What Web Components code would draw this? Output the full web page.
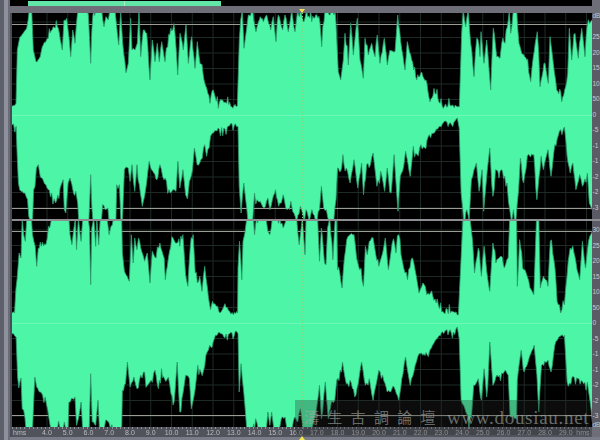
<!DOCTYPE html>
<html>
<head>
<meta charset="utf-8">
<title>Waveform</title>
<style>
  html, body { margin: 0; padding: 0; background: #6d6e78; overflow: hidden; }
</style>
</head>
<body>
<wave-editor></wave-editor>
<script>
/**
 * Traced wave outlines, as "x,y" pairs in the crop they were read from.
 */
const CH1_TOP_A = '37,318 48,310 52,150 60,110 70,100 80,85 88,40 95,40 100,150 108,185 118,175 130,135 145,115 160,80 175,85 187,150 192,60 200,55 208,120 212,170 218,90 225,130 232,45 250,40 258,40 265,45 272,190 278,50 290,40 305,40 312,80 318,50 325,60 330,40 345,40 350,80 356,135 362,40 368,130 378,218 385,190 392,55 396,150 405,150 412,130 417,40 422,170 430,90 440,100 450,240 457,120 465,185 472,130 478,185 485,125 495,185 503,140 512,85 525,100 533,225 540,100 550,150 558,75 565,190 575,110 585,205 592,125 600,190 612,240 620,265 630,310 640,270 655,325 665,300 680,310 695,320 712,318 718,120 722,60 727,40 732,145 738,100 745,45 758,40 768,95 778,60 790,65 800,45 812,90 820,50 828,125 835,45 848,90 855,45 865,95 875,40 885,95 893,40 899,50'
const CH1_TOP_B = '0,40 12,65 20,40 35,65 50,45 60,70 65,140 72,65 78,40 105,40 108,70 115,215 122,240 130,180 135,100 145,195 152,70 160,165 172,55 180,180 190,235 195,115 205,165 215,130 225,170 232,105 240,190 253,115 262,195 270,150 285,155 293,45 302,125 315,210 322,125 335,180 350,240 362,220 378,240 390,305 405,280 420,310 430,325 450,315 472,320 478,320 485,100 490,40 497,80 505,40 512,130 522,230 530,115 540,170 543,95 552,190 560,120 572,270 580,85 590,170 600,175 605,130 615,130 625,60 628,40 632,100 640,40 650,40 657,130 665,160 680,180 692,245 700,170 712,95 720,260 735,190 745,250 750,110 760,190 770,270 785,305 797,260 803,220 808,85 815,180 825,100 835,175 845,85 855,170 862,75 872,65 876,60'
const CH1_BOTTOM = '32,35 42,40 48,210 55,235 65,240 72,260 75,310 80,319 85,319 88,230 95,165 100,155 105,190 120,215 135,240 145,270 160,215 165,200 168,290 172,300 178,210 183,195 188,215 192,240 198,235 203,270 206,319 232,319 234,280 237,185 240,280 243,319 265,319 268,275 275,290 282,285 285,319 303,319 305,215 312,215 316,319 320,319 325,170 335,165 340,205 345,155 352,235 358,155 364,215 372,280 378,250 383,210 390,145 396,170 402,180 410,200 418,155 425,190 435,205 445,240 455,230 460,235 465,145 470,225 478,170 485,245 490,258 495,205 503,170 508,105 515,155 522,150 535,95 540,130 550,70 555,60 570,45 585,45 600,38 615,32 622,40 625,220 630,300 637,210 642,260 648,319 660,319 665,240 672,260 680,265 690,285 700,255 705,290 712,260 720,230 728,280 735,270 740,245 750,290 760,265 768,300 775,319 785,280 795,319 800,290 808,319 815,290 825,319 835,290 840,220 846,285 853,290 860,319 872,319 878,260 882,165 890,175 896,125 905,165 915,210 925,140 935,225 945,150 950,245 958,155 968,155 975,120 985,220 995,175 1005,235 1012,165 1022,240 1030,125 1040,295 1046,190 1055,160 1060,115 1072,190 1080,100 1090,125 1100,95 1110,105 1122,65 1135,60 1150,40 1165,25 1180,35 1195,15 1200,45 1205,240 1212,319 1220,290 1226,319 1232,200 1245,150 1252,235 1260,170 1264,295 1270,215 1280,105 1288,250 1295,170 1310,170 1325,210 1332,290 1337,319 1342,290 1348,319 1355,235 1360,135 1368,210 1378,130 1395,125 1403,260 1414,130 1420,170 1432,110 1440,190 1450,95 1462,55 1475,42 1482,130 1490,180 1497,150 1505,230 1515,185 1522,220 1535,180 1540,270 1547,290'
const CH2_TOP = '32,285 38,285 45,180 50,105 55,120 58,8 62,50 66,70 70,8 82,8 85,50 92,85 96,145 100,90 108,85 120,80 130,30 135,8 180,8 183,50 188,80 192,40 197,10 200,95 205,10 212,70 216,8 230,8 234,30 237,200 240,30 245,10 250,85 253,10 258,80 262,8 280,10 285,50 290,25 300,8 318,8 320,105 325,160 332,175 338,190 343,50 348,135 352,60 358,95 362,60 370,100 378,130 385,105 392,195 398,100 408,120 418,75 426,110 432,185 440,120 452,60 462,75 470,85 478,50 485,170 491,205 497,90 505,50 510,165 516,195 522,175 528,220 535,145 545,240 550,275 555,250 565,265 575,285 585,265 600,280 610,290 621,285 622,150 626,70 632,185 635,70 640,45 645,8 662,8 665,50 670,10 680,10 695,10 700,40 705,50 712,10 725,10 740,30 745,15 755,8 775,8 782,80 790,8 797,110 800,8 818,10 830,8 835,130 840,30 848,135 852,140 856,30 862,8 870,125 876,8 880,8 882,155 888,165 894,210 900,120 906,65 915,50 925,50 932,120 940,155 950,205 955,85 960,110 965,70 975,60 982,110 990,145 1000,105 1007,60 1015,155 1025,75 1035,105 1042,50 1048,110 1055,150 1065,185 1078,120 1088,175 1095,225 1105,195 1115,230 1125,225 1140,255 1160,285 1180,280 1198,290 1205,120 1210,8 1228,8 1235,70 1240,165 1250,90 1258,175 1265,85 1272,160 1280,220 1288,75 1296,135 1310,115 1318,150 1328,120 1332,8 1350,8 1352,205 1358,65 1366,150 1375,165 1385,210 1395,230 1402,8 1408,8 1412,210 1420,175 1432,205 1438,70 1448,130 1456,250 1465,285 1475,260 1485,130 1490,90 1500,105 1508,155 1515,185 1522,70 1530,150 1538,70 1548,40'
const CH2_BOTTOM = '32,35 42,45 46,165 52,180 55,168 58,260 62,265 68,315 85,315 88,240 91,165 96,195 105,210 118,225 122,250 128,290 133,315 150,315 153,297 158,315 165,315 168,300 172,315 178,315 180,240 190,230 196,225 200,310 205,290 212,240 216,315 233,315 237,155 241,300 250,310 256,235 260,315 272,315 276,295 284,300 295,315 318,315 320,205 328,185 333,120 340,195 350,165 358,200 368,160 378,150 385,190 395,175 405,145 414,200 422,140 430,170 440,165 447,215 455,240 463,120 470,270 478,215 485,160 495,170 500,260 510,200 517,130 525,150 532,145 538,100 548,70 560,50 572,30 585,45 600,35 615,28 622,35 625,210 630,125 640,250 645,315 660,315 668,290 675,315 696,315 700,270 705,310 710,270 716,315 730,315 735,290 745,285 750,315 763,315 770,285 778,300 785,260 792,315 815,315 825,275 835,190 840,290 850,180 858,290 866,240 875,235 880,175 895,120 905,185 915,175 930,220 945,120 955,190 965,170 975,235 990,145 1000,160 1012,210 1030,195 1042,235 1050,170 1060,105 1072,190 1085,130 1095,95 1105,100 1122,90 1130,70 1145,45 1165,25 1185,30 1195,15 1200,50 1205,235 1215,260 1222,280 1232,290 1238,190 1250,170 1258,235 1265,140 1272,225 1280,60 1288,190 1296,165 1305,160 1320,145 1328,160 1333,285 1350,290 1352,175 1362,85 1370,150 1385,100 1396,70 1403,160 1408,270 1415,130 1432,115 1440,150 1450,70 1460,45 1475,40 1482,180 1495,165 1510,170 1525,185 1535,180 1545,265 1548,300'

const SVG_NS = 'http://www.w3.org/2000/svg'
const ZOOM_X = 1568 / 600

/**
 * Small repeatable noise, so the photograph never changes.
 */
const rand = (n) => {
  const s = Math.sin(n * 127.1 + 11.7) * 43758.5453
  return s - Math.floor(s)
}

/**
 * Turns a traced string into page coordinates.
 */
const parseTrace = (text, scaleX, offsetX, offsetY) => text.split(' ').map((pair) => {
  const [x, y] = pair.split(',').map(Number)
  return [x / scaleX + offsetX, y / 3 + offsetY]
})

/**
 * Adds fine serration and thin peaks between the traced points and
 * pushes anything touching the edge of the channel out of view.
 */
const roughen = (points, edge, dir) => {
  const out = []
  const finish = (x, y) => {
    const past = (y - edge) * dir
    return [x, past < 1.6 ? edge - dir * 3 : y]
  }
  points.forEach(([x, y], i) => {
    out.push(finish(x, y))
    const next = points[i + 1]
    if (!next) return
    const steps = Math.floor(next[0] - x)
    for (let s = 1; s < steps; s++) {
      const t = s / steps
      const px = x + (next[0] - x) * t
      let py = y + (next[1] - y) * t + (rand(px * 3.1 + y) - 0.5) * 3.5
      if (rand(px * 7.3 + y * 0.7) > 0.72) py -= dir * rand(px + y) * 8
      out.push(finish(px, py))
    }
  })
  return out
}

const CHANNELS = {
  one: {
    top: 13,
    height: 206,
    center: 115,
    clip: [24, 208],
    upper: parseTrace(CH1_TOP_A, 3, 0, 0).concat(parseTrace(CH1_TOP_B, 3, 300, 0)),
    lower: parseTrace(CH1_BOTTOM, ZOOM_X, 0, 113)
  },
  two: {
    top: 221,
    height: 206,
    center: 323,
    clip: [231, 415],
    upper: parseTrace(CH2_TOP, ZOOM_X, 0, 218),
    lower: parseTrace(CH2_BOTTOM, ZOOM_X, 0, 322)
  }
}

/**
 * One channel of the waveform, drawn in page coordinates.
 */
customElements.define('wave-channel',
  class extends HTMLElement {
    constructor () {
      super()
      this.attachShadow({ mode: 'open' }).innerHTML = `
        <style>
          :host { display: block; background: #000; line-height: 0; }
          svg { display: block; width: 580px; filter: blur(0.35px); }
        </style>
        <svg xmlns="${SVG_NS}"></svg>
      `
    }

    connectedCallback () {
      const data = CHANNELS[this.getAttribute('channel')]
      const svg = this.shadowRoot.querySelector('svg')
      svg.setAttribute('viewBox', `12 ${data.top} 580 ${data.height}`)
      svg.style.height = `${data.height}px`

      let body = ''
      // Grid sits behind the wave, only the black parts show it.
      for (let x = 47; x < 592; x += 20.75) {
        body += `<line x1="${x}" x2="${x}" y1="${data.top}" y2="${data.top + data.height}" stroke="#1d2b24"/>`
      }
      for (let n = -6; n <= 6; n++) {
        const y = data.center + n * 15.5
        body += `<line x1="12" x2="592" y1="${y}" y2="${y}" stroke="#1d2b24"/>`
      }
      data.clip.forEach((y) => {
        body += `<line x1="12" x2="592" y1="${y + 0.5}" y2="${y + 0.5}" stroke="#9c9c94"/>`
      })

      const bottom = data.top + data.height
      const upper = roughen(data.upper, data.top, 1)
      const lower = roughen(data.lower, bottom, -1).reverse()
      const outline = [[11, upper[0][1]], ...upper, [593, upper[upper.length - 1][1]],
        [593, lower[0][1]], ...lower, [11, lower[lower.length - 1][1]]]
      const points = outline.map(([x, y]) => `${x.toFixed(1)},${y.toFixed(1)}`).join(' ')
      body += `<polygon points="${points}" fill="#4cf6a6" stroke="#2f9c6f" stroke-width="0.8" stroke-linejoin="bevel"/>`

      body += `<line x1="12" x2="592" y1="${data.center + 0.5}" y2="${data.center + 0.5}" stroke="#6ff7b9"/>`
      body += `<line x1="302.5" x2="302.5" y1="${data.top}" y2="${bottom}" stroke="#84d47e" stroke-dasharray="1 2"/>`
      svg.innerHTML = body
    }
  }
)

customElements.define('db-ruler',
  class extends HTMLElement {
    constructor () {
      super()
      this.attachShadow({ mode: 'open' }).innerHTML = `
        <style>
          :host {
            display: flex;
            flex-direction: column;
            width: 8px;
            box-sizing: border-box;
            background: #5a5b65;
            color: #cbcbcb;
            font: 6.5px "Liberation Sans", sans-serif;
            white-space: nowrap;
          }
          div { flex: none; height: 15.5px; line-height: 15.5px; padding-left: 0.5px; }
          .unit { height: var(--unit-height, 16.25px); line-height: var(--unit-line, 6px); }
        </style>
      `
    }

    connectedCallback () {
      const labels = this.getAttribute('labels').split(' ')
      labels.forEach((label) => {
        const row = document.createElement('div')
        row.textContent = label
        if (label === 'dB') row.className = 'unit'
        this.shadowRoot.appendChild(row)
      })
    }
  }
)

/**
 * The overview strip along the top, with the visible range in green.
 */
customElements.define('overview-bar',
  class extends HTMLElement {
    constructor () {
      super()
      this.attachShadow({ mode: 'open' }).innerHTML = `
        <style>
          :host { display: flex; height: 6px; background: #000; margin-right: 8px; }
          .range {
            width: 193px;
            height: 5px;
            margin: 1px 0 0 18px;
            background: linear-gradient(90deg, #62e6a8 96px, #a5f0cb 96px, #a5f0cb 97px, #62e6a8 97px);
          }
        </style>
        <div class="range"></div>
      `
    }
  }
)

/**
 * A plain grey bar carrying a small yellow position marker.
 */
customElements.define('marker-bar',
  class extends HTMLElement {
    constructor () {
      super()
      const up = this.hasAttribute('up')
      this.attachShadow({ mode: 'open' }).innerHTML = `
        <style>
          :host {
            display: flex;
            height: var(--bar-height, 7px);
            padding-left: 289px;
            align-items: ${up ? 'flex-end' : 'flex-start'};
            background: var(--bar-color, #6d6e78);
          }
          svg { display: block; margin-top: ${up ? '0' : '3px'}; }
        </style>
        <svg width="6" height="4" viewBox="0 0 6 4">
          <polygon points="${up ? '3,0 6,4 0,4' : '0,0 6,0 3,4'}" fill="#f4e64a"/>
        </svg>
      `
    }
  }
)

/**
 * The time scale below the wave.
 */
customElements.define('time-ruler',
  class extends HTMLElement {
    constructor () {
      super()
      this.attachShadow({ mode: 'open' }).innerHTML = `
        <style>
          :host {
            display: flex;
            height: 10px;
            width: 580px;
            box-sizing: border-box;
            padding-top: 2px;
            background-color: #50525c;
            background-image: repeating-linear-gradient(90deg, #8f9098 0 1px, transparent 1px 4.15px);
            background-size: auto 2px;
            background-repeat: no-repeat;
            color: #bdbdbd;
            font: 7px/8px "Liberation Sans", sans-serif;
            white-space: nowrap;
          }
          span { flex: none; width: 20.75px; text-align: center; filter: blur(0.25px); }
          .first { width: 24.6px; text-align: left; padding-left: 1px; box-sizing: border-box; }
          .last { width: 16.4px; text-align: right; padding-right: 3px; box-sizing: border-box; }
        </style>
      `
    }

    connectedCallback () {
      const add = (text, name) => {
        const cell = document.createElement('span')
        cell.textContent = text
        if (name) cell.className = name
        this.shadowRoot.appendChild(cell)
      }
      add('hms', 'first')
      for (let second = 4; second <= 29; second++) add(`${second}.0`)
      add('hms', 'last')
    }
  }
)

/**
 * The site stamp lying over the lower right corner.
 */
customElements.define('water-mark',
  class extends HTMLElement {
    constructor () {
      super()
      this.attachShadow({ mode: 'open' }).innerHTML = `
        <style>
          :host {
            position: absolute;
            left: 295px;
            top: 400px;
            width: 295px;
            height: 35px;
            display: flex;
            padding: 7px 0 0 9px;
            box-sizing: border-box;
            background: rgba(40, 40, 40, 0.3);
            color: rgba(165, 170, 165, 0.62);
            white-space: nowrap;
          }
          .name {
            font: 15px/20px "Noto Sans CJK TC", sans-serif;
            letter-spacing: 8.3px;
            width: 143px;
            flex: none;
          }
          .site {
            font: 19px/21px "Liberation Serif", serif;
            letter-spacing: 0.7px;
          }
        </style>
        <span class="name"><slot name="name"></slot></span>
        <span class="site"><slot name="site"></slot></span>
      `
    }
  }
)

/**
 * The whole editor window, built from the parts above.
 */
customElements.define('wave-editor',
  class extends HTMLElement {
    constructor () {
      super()
      this.attachShadow({ mode: 'open' }).innerHTML = `
        <style>
          :host {
            position: relative;
            display: flex;
            width: 600px;
            height: 440px;
            overflow: hidden;
            background: #6d6e78;
          }
          .strip {
            flex: none;
            width: 10px;
            background: linear-gradient(90deg, #5d5f6a 0 4px, #8e909b 4px 8px, #6a6c77 8px);
          }
          .main { flex: none; width: 590px; display: flex; flex-direction: column; }
          .row { display: flex; border-left: 2px solid #4a4c56; }
          .stack { display: flex; flex-direction: column; }
          .divider { height: 2px; background: #8d8d92; }
          .second { height: 206px; padding-top: 1.25px; --unit-height: 3.25px; --unit-line: 1px; }
          .tail { --bar-height: 3px; --bar-color: #7a7c88; }
        </style>
        <div class="strip"></div>
        <div class="main">
          <overview-bar></overview-bar>
          <marker-bar></marker-bar>
          <div class="row">
            <div class="stack">
              <wave-channel channel="one"></wave-channel>
              <div class="divider"></div>
              <wave-channel channel="two"></wave-channel>
              <time-ruler></time-ruler>
            </div>
            <div class="stack">
              <db-ruler labels="dB 25 20 15 10 50 0 -5 -1 -1 -2 -2 -3" style="height:206px"></db-ruler>
              <div class="divider"></div>
              <db-ruler class="second" labels="30 25 20 15 10 50 0 -5 -1 -1 -2 -2 -3 dB"></db-ruler>
            </div>
          </div>
          <marker-bar class="tail" up></marker-bar>
        </div>
        <water-mark>
          <span slot="name">濤生古調論壇</span>
          <span slot="site">www.dousiau.net</span>
        </water-mark>
      `
    }
  }
)
</script>
</body>
</html>
